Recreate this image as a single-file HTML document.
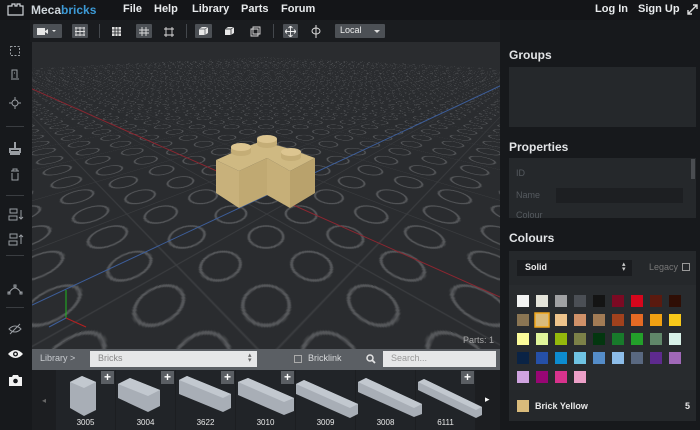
<!DOCTYPE html>
<html><head><meta charset="utf-8"><style>
*{margin:0;padding:0;box-sizing:border-box}
body{width:700px;height:430px;overflow:hidden;background:#17191c;font-family:"Liberation Sans",sans-serif;position:relative}
.a{position:absolute}
.top{left:0;top:0;width:700px;height:20px;background:#141518}
.menu{color:#e8eaec;font-weight:bold;font-size:11px;top:3px}
.tb{left:30px;top:20px;width:470px;height:22px;background:#1a1c1f}
.btn{background:#4c5055;height:14px;top:24px;border-radius:1px}
.sep{width:1px;height:14px;top:24px;background:#44484d}
.vp{left:32px;top:42px;width:468px;height:307px;overflow:hidden;background:#2a2c2f;perspective:265px;perspective-origin:234px 153px}
.plane{position:absolute;left:-1766px;top:-1847px;width:4000px;height:4000px;
transform:rotateX(60deg) rotateZ(45deg);
background:
radial-gradient(circle at 22px 22px,transparent 12.2px,#56585b 12.8px,#56585b 14.2px,transparent 14.8px) 0 0/44px 44px,
linear-gradient(90deg,#3c3e41 1px,transparent 1px) 0 0/88px 88px,
linear-gradient(0deg,#3c3e41 1px,transparent 1px) 0 0/88px 88px,#2a2c2f}
.rp{left:500px;top:20px;width:200px;height:410px;background:#17191c}
.h{color:#e2e4e6;font-size:12px;font-weight:bold;left:509px}
.box{left:509px;width:187px;background:#25282b}
.lb{left:0;top:20px;width:30px;height:410px;background:#17191c}
.ls{left:6px;width:18px;height:1px;background:#3a3d41}
.cell{top:370px;width:59px;height:60px;background:#212428}
.lbl{color:#e8e8e8;font-size:8px;width:59px;text-align:center;top:418px}
.plus{width:13px;height:13px;background:#5a5e63;color:#fff;font-size:12px;font-weight:bold;line-height:12px;text-align:center;top:371px}
</style></head><body>
<div class="a top"></div>
<svg class="a" style="left:7px;top:3px" width="17" height="13" viewBox="0 0 17 13"><path d="M1 3h4V1h3v2h2V1h3v2h3v9H1z" fill="none" stroke="#cfd3d7" stroke-width="1.2"/></svg>
<div class="a" style="left:31px;top:3px;font-size:12px;font-weight:bold;color:#cfd5da">Meca<span style="color:#3d9ad6">bricks</span></div>
<div class="a menu" style="left:123px">File</div>
<div class="a menu" style="left:154px">Help</div>
<div class="a menu" style="left:192px">Library</div>
<div class="a menu" style="left:241px">Parts</div>
<div class="a menu" style="left:281px">Forum</div>
<div class="a menu" style="left:595px">Log In</div>
<div class="a menu" style="left:638px">Sign Up</div>
<svg class="a" style="left:687px;top:4px" width="11" height="11" viewBox="0 0 11 11"><path d="M1 10L10 1M6 1h4v4M1 6v4h4" stroke="#ddd" stroke-width="1.4" fill="none"/></svg>

<div class="a tb"></div>
<div class="a btn" style="left:33px;width:29px"></div>
<svg class="a" style="left:37px;top:27px" width="22" height="9"><rect x="0" y="1" width="8" height="7" fill="#e6e6e6"/><path d="M8 4l3-2v5l-3-2z" fill="#e6e6e6"/><path d="M15 3l2 2 2-2z" fill="#e6e6e6"/></svg>
<div class="a btn" style="left:72px;width:16px"></div>
<svg class="a" style="left:75px;top:27px" width="10" height="9"><path d="M0 1h10M0 4.5h10M0 8h10M1 0v9M5 0v9M9 0v9" stroke="#ddd" stroke-width="0.9"/></svg>
<div class="a sep" style="left:99px"></div>
<svg class="a" style="left:112px;top:27px" width="9" height="9"><rect width="9" height="9" fill="#ddd"/><path d="M0 3h9M0 6h9M3 0v9M6 0v9" stroke="#1a1c1f" stroke-width="0.8"/></svg>
<div class="a btn" style="left:136px;width:16px"></div>
<svg class="a" style="left:139px;top:27px" width="10" height="9"><path d="M0 3h10M0 6h10M3 0v9M7 0v9" stroke="#ddd" stroke-width="0.9"/></svg>
<svg class="a" style="left:164px;top:27px" width="10" height="10"><path d="M2 0v10M8 0v10M0 2h10M0 8h10" stroke="#ddd" stroke-width="0.9"/></svg>
<div class="a sep" style="left:186px"></div>
<div class="a btn" style="left:195px;width:17px"></div>
<svg class="a" style="left:198px;top:26px" width="11" height="10"><path d="M1 3l3-2h6v6l-3 2H1z" fill="#e8e8e8"/><path d="M1 3h6v6M7 3l3-2" stroke="#4c5055" stroke-width="0.7" fill="none"/></svg>
<svg class="a" style="left:224px;top:26px" width="11" height="10"><path d="M1 3l3-2h6v6l-3 2H1z" fill="#e8e8e8"/><path d="M1 3h6v6M7 3l3-2" stroke="#1a1c1f" stroke-width="0.7" fill="none"/></svg>
<svg class="a" style="left:250px;top:26px" width="11" height="11"><path d="M3 1h7v7H3zM1 3h7v7H1z" fill="none" stroke="#ddd" stroke-width="0.9"/></svg>
<div class="a sep" style="left:273px"></div>
<div class="a btn" style="left:283px;width:15px"></div>
<svg class="a" style="left:285px;top:26px" width="11" height="11"><path d="M5.5 0v11M0 5.5h11M3.5 2l2-2 2 2M3.5 9l2 2 2-2M2 3.5l-2 2 2 2M9 3.5l2 2-2 2" stroke="#eee" fill="none" stroke-width="0.9"/></svg>
<svg class="a" style="left:310px;top:25px" width="12" height="13"><ellipse cx="6" cy="6" rx="4" ry="3" fill="none" stroke="#ddd"/><path d="M6 0v13" stroke="#ddd"/></svg>
<div class="a btn" style="left:335px;width:50px"></div>
<div class="a" style="left:340px;top:25px;color:#eee;font-size:9px">Local</div>
<svg class="a" style="left:374px;top:30px" width="6" height="3"><path d="M0 0h6L3 3z" fill="#ddd"/></svg>

<div class="a lb"></div>
<svg class="a" style="left:0;top:42px" width="30" height="350" fill="none" stroke="#9a9ea3" stroke-width="1">
<rect x="10.5" y="4.5" width="9" height="9" stroke-dasharray="2 1.5"/>
<path d="M12 36v-8h5v8M14 31h1M11 37h8" />
<circle cx="15" cy="61" r="3"/><path d="M15 55v3M15 64v3M9 61h3M18 61h3"/>
<path d="M15 100v6M10 107h10v3H10zM10 112h10" stroke-width="2"/>
<path d="M11 129h8M13 129v-2h4v2M12 131v7h6v-7"/>
<rect x="10" y="167" width="7" height="4"/><rect x="9" y="174" width="8" height="4"/><path d="M21 168v9M19 175l2 2 2-2"/>
<rect x="10" y="192" width="7" height="4"/><rect x="9" y="199" width="8" height="4"/><path d="M21 193v9M19 195l2-2 2 2"/>
<path d="M9 251q6-10 12 0"/><rect x="8" y="250" width="2" height="2"/><rect x="20" y="250" width="2" height="2"/><rect x="14" y="243" width="2" height="2"/>
<path d="M9 287q6-6 12 0q-6 6-12 0zM10 292l10-10"/>
</svg>
<div class="a ls" style="top:126px"></div>
<div class="a ls" style="top:195px"></div>
<div class="a ls" style="top:255px"></div>
<div class="a ls" style="top:307px"></div>
<svg class="a" style="left:8px;top:349px" width="15" height="10"><path d="M0 5q7.5-8 15 0q-7.5 8-15 0z" fill="#f2f2f2"/><circle cx="7.5" cy="5" r="2.5" fill="#17191c"/><circle cx="7.5" cy="5" r="1.2" fill="#f2f2f2"/></svg>
<svg class="a" style="left:9px;top:375px" width="13" height="11"><path d="M0 2h3l1-2h5l1 2h3v9H0z" fill="#f2f2f2"/><circle cx="6.5" cy="6" r="2.3" fill="#17191c"/></svg>

<div class="a vp">
<div class="plane"></div>
<svg class="a" style="left:0;top:0" width="468" height="307">
<path d="M-2 46L468 255" stroke="#8c2630" stroke-width="1"/>
<path d="M-2 264L468 44" stroke="#3d5e9a" stroke-width="1"/>
<path d="M34 248v28" stroke="#1fb81f" stroke-width="1"/>
<path d="M34 276l20 9" stroke="#b52020"/><path d="M34 276l-17 9" stroke="#3d5e9a"/>
<g transform="translate(-32,-42)">
<path d="M216 160L239 171L239 208L216 193z" fill="#c8b17b"/>
<path d="M239 171L267 158L267 195L239 208z" fill="#c0a972"/>
<path d="M267 158L290 171L290 208L267 195z" fill="#c6af78"/>
<path d="M290 171L315 158L315 193L290 208z" fill="#b9a26c"/>
<path d="M216 160L243 148L262 141L290 149L315 158L290 171L267 158L239 171z" fill="#cfb982"/>
<g fill="#c4ad76"><rect x="231" y="147" width="20" height="5"/><rect x="257" y="139" width="20" height="5"/><rect x="281" y="152" width="20" height="5"/></g>
<g fill="#c4ad76"><ellipse cx="241" cy="152" rx="10" ry="4"/><ellipse cx="267" cy="144" rx="10" ry="4"/><ellipse cx="291" cy="157" rx="10" ry="4"/></g>
<g fill="#dcc590"><ellipse cx="241" cy="147" rx="10" ry="4"/><ellipse cx="267" cy="139" rx="10" ry="4"/><ellipse cx="291" cy="152" rx="10" ry="4"/></g>
</g>
</svg>
<div class="a" style="right:6px;bottom:4px;color:#aaa;font-size:9px">Parts: 1</div>
</div>

<div class="a" style="left:32px;top:349px;width:468px;height:21px;background:#5b5f64"></div>
<div class="a" style="left:40px;top:353px;color:#c8cbcf;font-size:9px">Library &gt;</div>
<div class="a" style="left:90px;top:351px;width:167px;height:16px;background:#e6e7e8"></div>
<div class="a" style="left:98px;top:353px;color:#888;font-size:9px">Bricks</div>
<div class="a" style="left:248px;top:353px;color:#666;font-size:7px;line-height:5px">▴<br>▾</div>
<div class="a" style="left:294px;top:355px;width:8px;height:8px;border:1px solid #aaa"></div>
<div class="a" style="left:308px;top:353px;color:#d8dadc;font-size:9px">Bricklink</div>
<svg class="a" style="left:366px;top:354px" width="10" height="10"><circle cx="4" cy="4" r="3" fill="none" stroke="#e4e4e4" stroke-width="1.5"/><path d="M6 6l3 3" stroke="#e4e4e4" stroke-width="1.8"/></svg>
<div class="a" style="left:383px;top:351px;width:113px;height:16px;background:#e6e7e8"></div>
<div class="a" style="left:391px;top:353px;color:#999;font-size:9px">Search...</div>

<div class="a" style="left:32px;top:370px;width:468px;height:60px;background:#1c1e21"></div>
<div class="a" style="left:42px;top:396px;color:#666;font-size:8px">◂</div>
<div class="a" style="left:485px;top:394px;color:#fff;font-size:9px">▸</div>
<div class="a cell" style="left:56px"></div><div class="a cell" style="left:116px"></div><div class="a cell" style="left:176px"></div><div class="a cell" style="left:236px"></div><div class="a cell" style="left:296px"></div><div class="a cell" style="left:356px"></div><div class="a cell" style="left:416px"></div>
<div class="a plus" style="left:101px">+</div><div class="a plus" style="left:161px">+</div><div class="a plus" style="left:221px">+</div><div class="a plus" style="left:281px">+</div><div class="a plus" style="left:461px">+</div>
<svg class="a" style="left:56px;top:370px" width="430" height="50">
<g fill="#a8aeb6">
<path d="M14 12l12-6 14 6v28l-12 6-14-8z"/><path d="M62 14l12-6 30 12v16l-12 6-30-14z"/><path d="M123 10l8-4 44 18v14l-8 4-44-18z"/><path d="M182 12l10-4 46 20v13l-10 4-46-20z"/><path d="M240 14l8-4 54 24v10l-8 4-54-24z"/><path d="M302 12l8-4 56 26v10l-8 3-56-25z"/><path d="M362 12l6-3 58 28v8l-6 3-58-28z"/>
</g>
<g fill="#c2c8cf"><path d="M14 12l12-6 14 6-12 6z"/><path d="M62 14l12-6 30 12-12 6z"/><path d="M123 10l8-4 44 18-8 4z"/><path d="M182 12l10-4 46 20-10 4z"/><path d="M240 14l8-4 54 24-8 4z"/><path d="M302 12l8-4 56 26-8 4z"/><path d="M362 12l6-3 58 28-6 3z"/></g>
</svg>
<div class="a lbl" style="left:56px">3005</div><div class="a lbl" style="left:116px">3004</div><div class="a lbl" style="left:176px">3622</div><div class="a lbl" style="left:236px">3010</div><div class="a lbl" style="left:296px">3009</div><div class="a lbl" style="left:356px">3008</div><div class="a lbl" style="left:416px">6111</div>

<div class="a rp"></div>
<div class="a h" style="top:48px">Groups</div>
<div class="a box" style="top:67px;height:60px"></div>
<div class="a h" style="top:140px">Properties</div>
<div class="a box" style="top:158px;height:60px"></div>
<div class="a" style="left:691px;top:159px;width:4px;height:20px;background:#4a4d51"></div>
<div class="a" style="left:516px;top:168px;color:#555a5f;font-size:9px">ID</div>
<div class="a" style="left:516px;top:190px;color:#555a5f;font-size:9px">Name</div>
<div class="a" style="left:556px;top:188px;width:127px;height:15px;background:#1d1f22"></div>
<div class="a" style="left:516px;top:210px;color:#555a5f;font-size:9px;height:8px;overflow:hidden">Colour</div>
<div class="a h" style="top:231px">Colours</div>
<div class="a box" style="top:251px;height:170px"></div>
<div class="a" style="left:517px;top:260px;width:115px;height:16px;background:#1a1c1f"></div>
<div class="a" style="left:525px;top:262px;color:#e8e8e8;font-size:9px;font-weight:bold">Solid</div>
<div class="a" style="left:622px;top:262px;color:#ccc;font-size:7px;line-height:5px">▴<br>▾</div>
<div class="a" style="left:649px;top:262px;color:#777;font-size:9px">Legacy</div>
<div class="a" style="left:682px;top:263px;width:8px;height:8px;border:1px solid #999"></div>
<div class="a" style="left:509px;top:285px;width:187px;height:105px;background:#282b2e"></div>
<svg class="a" style="left:517px;top:295px" width="170" height="90">
<g>
<rect x="0" y="0" width="12" height="12" fill="#f2f3f3"/><rect x="19" y="0" width="12" height="12" fill="#e4e4da"/><rect x="38" y="0" width="12" height="12" fill="#a0a1a3"/><rect x="57" y="0" width="12" height="12" fill="#4b4f55"/><rect x="76" y="0" width="12" height="12" fill="#141414"/><rect x="95" y="0" width="12" height="12" fill="#7b0a23"/><rect x="114" y="0" width="12" height="12" fill="#d5061c"/><rect x="133" y="0" width="12" height="12" fill="#5a1a0f"/><rect x="152" y="0" width="12" height="12" fill="#2f0e05"/>
<rect x="0" y="19" width="12" height="12" fill="#8a7553"/><rect x="18" y="18" width="14" height="14" fill="#d9bb7b" stroke="#f0a61a" stroke-width="1.5"/><rect x="38" y="19" width="12" height="12" fill="#eec48c"/><rect x="57" y="19" width="12" height="12" fill="#d09168"/><rect x="76" y="19" width="12" height="12" fill="#a27b55"/><rect x="95" y="19" width="12" height="12" fill="#a0411d"/><rect x="114" y="19" width="12" height="12" fill="#e46a24"/><rect x="133" y="19" width="12" height="12" fill="#f0a012"/><rect x="152" y="19" width="12" height="12" fill="#f8c81a"/>
<rect x="0" y="38" width="12" height="12" fill="#fcfc9a"/><rect x="19" y="38" width="12" height="12" fill="#e0f59a"/><rect x="38" y="38" width="12" height="12" fill="#94b90c"/><rect x="57" y="38" width="12" height="12" fill="#7c8148"/><rect x="76" y="38" width="12" height="12" fill="#03360f"/><rect x="95" y="38" width="12" height="12" fill="#187a2b"/><rect x="114" y="38" width="12" height="12" fill="#23a02a"/><rect x="133" y="38" width="12" height="12" fill="#608769"/><rect x="152" y="38" width="12" height="12" fill="#d8f1e8"/>
<rect x="0" y="57" width="12" height="12" fill="#0a2345"/><rect x="19" y="57" width="12" height="12" fill="#2550a8"/><rect x="38" y="57" width="12" height="12" fill="#0d8cd0"/><rect x="57" y="57" width="12" height="12" fill="#6fc3e3"/><rect x="76" y="57" width="12" height="12" fill="#548cc8"/><rect x="95" y="57" width="12" height="12" fill="#8cbce8"/><rect x="114" y="57" width="12" height="12" fill="#596880"/><rect x="133" y="57" width="12" height="12" fill="#5e2a8e"/><rect x="152" y="57" width="12" height="12" fill="#a068b8"/>
<rect x="0" y="76" width="12" height="12" fill="#d0a4e0"/><rect x="19" y="76" width="12" height="12" fill="#980674"/><rect x="38" y="76" width="12" height="12" fill="#d8338d"/><rect x="57" y="76" width="12" height="12" fill="#eca0c8"/>
</g></svg>
<div class="a" style="left:517px;top:400px;width:12px;height:12px;background:#d9bb7b"></div>
<div class="a" style="left:535px;top:401px;color:#e8e8e8;font-size:9px;font-weight:bold">Brick Yellow</div>
<div class="a" style="left:685px;top:401px;color:#e8e8e8;font-size:9px;font-weight:bold">5</div>
</body></html>
